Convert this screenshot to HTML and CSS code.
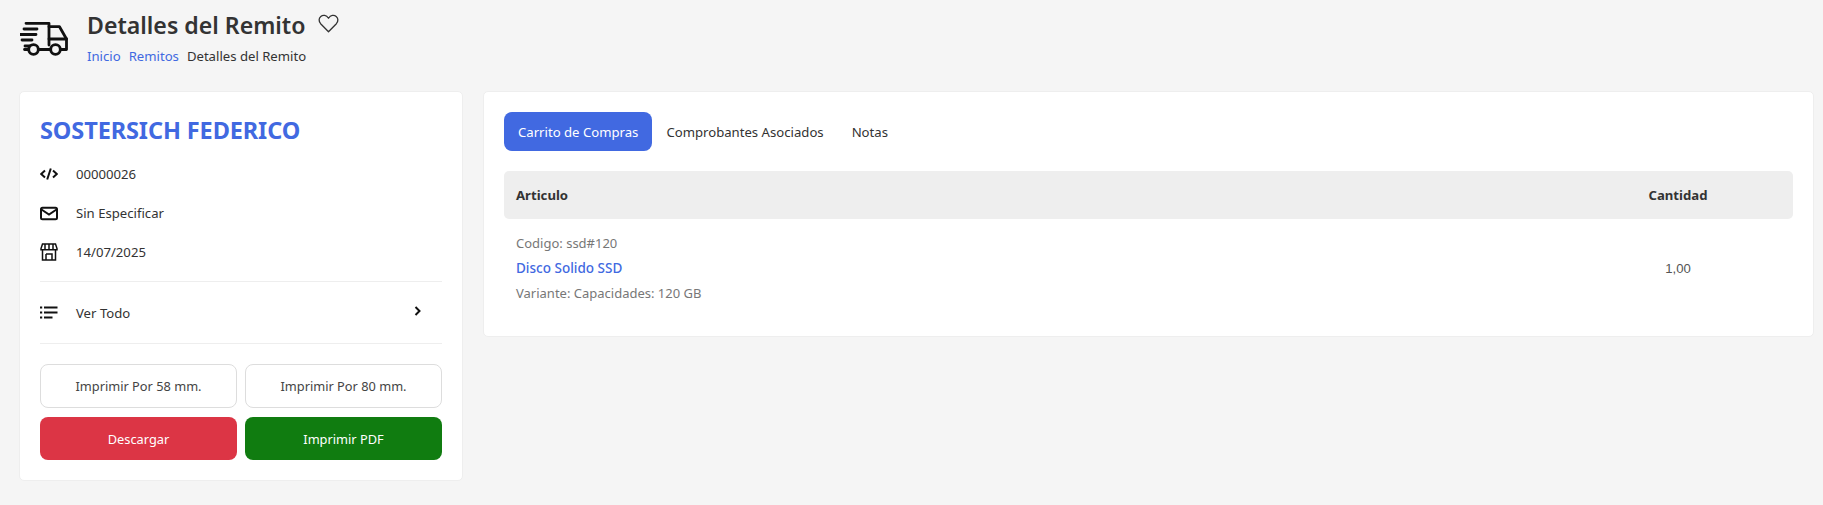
FILE: index.html
```html
<!DOCTYPE html>
<html lang="es">
<head>
<meta charset="utf-8">
<title>Detalles del Remito</title>
<link rel="stylesheet" href="styles.css">
</head>
<body>
<header class="page-header">
  <svg class="truck" viewBox="0 0 48 36" fill="none" stroke="#111" stroke-width="2.800" stroke-linecap="round" stroke-linejoin="round">
    <path d="M6 3.300H29V25"/>
    <path d="M29 6.700H39.500L46.500 19V29.500H41"/>
    <path d="M29 19H46.500"/>
    <path d="M4 9H17M0 14.500H16M2 20H12M5 26H10M4.500 29.500H8"/>
    <circle cx="13.500" cy="29.500" r="4.800"/>
    <circle cx="35.500" cy="29.500" r="4.800"/>
    <path d="M18.500 29.500H30.500"/>
  </svg>
  <div class="header-text">
    <div class="title-row">
      <h1 class="title">Detalles del Remito</h1>
      <svg class="heart" viewBox="0 0 24 24" fill="none" stroke="#333" stroke-width="1.500" stroke-linejoin="round"><path d="M12 21.500 3 12.200C.6 9.600.8 5.800 3.200 3.900 5.700 1.900 9.500 2.300 12 6c2.500-3.700 6.300-4.100 8.800-2.100 2.400 1.900 2.600 5.700.2 8.300z"/></svg>
    </div>
    <nav class="crumbs"><a class="crumb-link">Inicio</a><a class="crumb-link">Remitos</a><span>Detalles del Remito</span></nav>
  </div>
</header>
<main class="layout">
  <section class="card side">
    <h2 class="name">SOSTERSICH FEDERICO</h2>
    <ul class="info">
      <li class="info-row">
        <svg class="ico" viewBox="0 0 18 18" fill="none" stroke="#111" stroke-width="2"><path d="M5 5.500 1.200 9 5 12.500M13 5.500 16.800 9 13 12.500M10.800 3.500 7.200 14.500"/></svg>
        <span>00000026</span>
      </li>
      <li class="info-row">
        <svg class="ico" viewBox="0 0 18 18" fill="none" stroke="#111" stroke-width="2"><rect x="1" y="3.700" width="16" height="11.500" rx="1.500"/><path d="M1.500 5.500 9 10.500l7.500-5"/></svg>
        <span>Sin Especificar</span>
      </li>
      <li class="info-row">
        <svg class="ico" viewBox="0 0 18 18" fill="none" stroke="#111" stroke-width="1.500"><path d="M2.500 1h13L17 5.500v1.200H1V5.500zM2.500 7v10h13V7M6 11h6v6M6 17v-6M5 1.500v5M9 1.500v5M13 1.500v5"/></svg>
        <span>14/07/2025</span>
      </li>
    </ul>
    <div class="info-row more">
      <svg class="ico" viewBox="0 0 18 18" fill="none" stroke="#111" stroke-width="2"><path d="M4 3.500h13.500M4 8.500h13.500M4 13.500h8.500M0 3.500h2.200M0 8.500h2.200M0 13.500h2.200"/></svg>
      <span class="more-label">Ver Todo</span>
      <svg class="chev" viewBox="0 0 10 12" fill="none" stroke="#111" stroke-width="2"><path d="M2.500 2 6.500 6l-4 4"/></svg>
    </div>
    <div class="actions">
      <button class="btn outline">Imprimir Por 58 mm.</button>
      <button class="btn outline">Imprimir Por 80 mm.</button>
      <button class="btn danger">Descargar</button>
      <button class="btn success">Imprimir PDF</button>
    </div>
  </section>
  <section class="card content">
    <div class="tabs">
      <span class="tab active">Carrito de Compras</span>
      <span class="tab">Comprobantes Asociados</span>
      <span class="tab">Notas</span>
    </div>
    <div class="table-head">
      <span class="col-main">Articulo</span>
      <span class="col-qty">Cantidad</span>
    </div>
    <div class="table-row">
      <div class="col-main">
        <div class="muted">Codigo: ssd#120</div>
        <a class="product">Disco Solido SSD</a>
        <div class="muted">Variante: Capacidades: 120 GB</div>
      </div>
      <div class="col-qty qty">1,00</div>
    </div>
  </section>
</main>
</body>
</html>
```
FILE: styles.css
```css
* { box-sizing: border-box; }
html, body { margin: 0; }
body {
  background: #f5f5f5;
  color: #333;
  font-family: "Noto Sans", "Open Sans", sans-serif;
  font-size: 13.150px;
  padding: 0 9px 0 19px;
  height: 505px;
  overflow: hidden;
}
.page-header { display: flex; align-items: flex-start; height: 91px; padding-left: 1px; }
.truck { width: 48px; height: 36px; margin-top: 20px; margin-right: 19px; flex: none; }
.header-text { padding-top: 10px; }
.title-row { display: flex; align-items: center; height: 30px; }
.title { margin: 0; font-size: 23.100px; font-weight: 600; color: #333; line-height: 30px; }
.heart { width: 21px; height: 21px; margin-left: 13px; margin-top: -4px; }
.crumbs { display: flex; gap: 8px; margin-top: 6px; line-height: 20px; color: #333; }
.crumb-link { color: #4169e1; }
.layout { display: grid; grid-template-columns: 444px 1fr; gap: 20px; align-items: start; }
.card { background: #fff; border: 1px solid #eee; border-radius: 5px; }
.side { padding: 20px; }
.name { margin: 0; font-size: 23.500px; font-weight: 700; color: #4169e1; line-height: 36px; letter-spacing: -0.1px; }
.info { list-style: none; margin: 6px 0 0; padding: 0 0 10px; border-bottom: 1px solid #eee; }
.info-row { display: flex; align-items: center; height: 39px; }
.ico { width: 18px; height: 18px; margin-right: 18px; flex: none; }
.more { height: 62px; border-bottom: 1px solid #eee; }
.more-label { flex: 1; }
.chev { width: 10px; height: 12px; margin-right: 19px; margin-top: -3px; }
.actions { display: grid; grid-template-columns: 1fr 1fr; gap: 9px 8px; margin-top: 20px; }
.btn { height: 44px; border-radius: 8px; border: 1px solid transparent; font: inherit; font-size: 12.800px; }
.actions .btn:nth-child(n+3) { height: 43px; }
.outline { background: #fff; border-color: #ddd; color: #444; }
.danger { background: #dc3545; color: #fff; }
.success { background: #107c10; color: #fff; }
.content { padding: 20px; }
.tabs { display: flex; height: 39px; }
.tab { display: flex; align-items: center; padding: 0 14px; border-radius: 8px; }
.tab.active { background: #4169e1; color: #fff; }
.table-head { display: flex; align-items: center; justify-content: space-between; height: 48px; margin-top: 20px; background: #eee; border-radius: 5px; font-weight: 700; }
.col-main { padding-left: 12px; }
.col-qty { width: 230px; text-align: center; }
.table-row { display: flex; align-items: center; justify-content: space-between; padding: 12px 0 10px; }
.table-row .col-main { line-height: 25px; }
.muted { color: #777; font-size: 13px; }
.product { color: #4169e1; font-size: 13.500px; font-weight: 500; }
.qty { font-family: "Liberation Sans", Arial, sans-serif; color: #555; }
```
